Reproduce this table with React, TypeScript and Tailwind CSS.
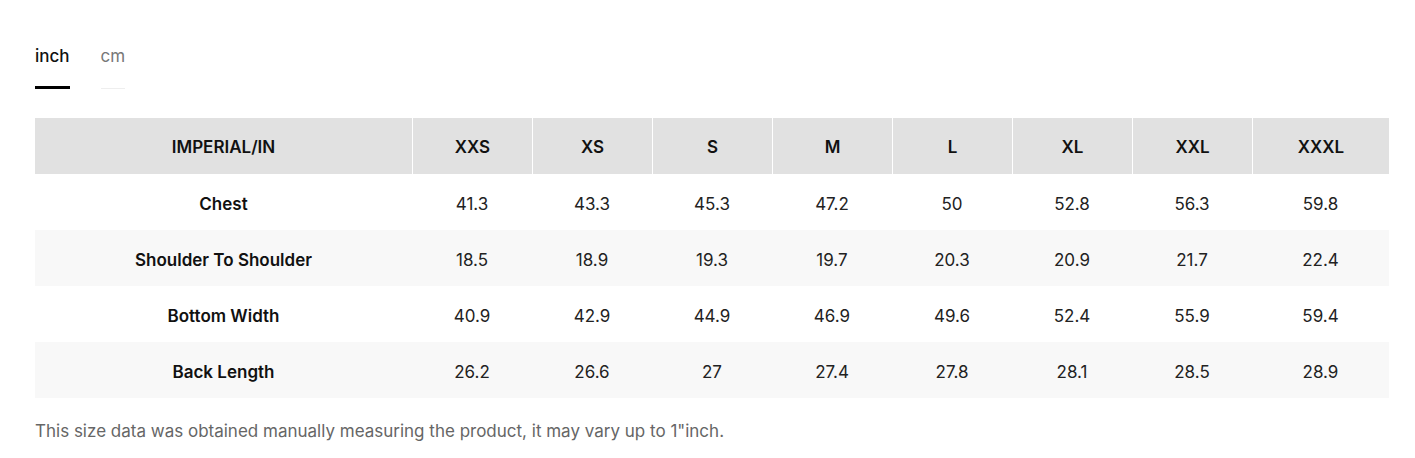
import { useState } from "react";

const sizes = ["XXS", "XS", "S", "M", "L", "XL", "XXL", "XXXL"];

const rows: { label: string; values: string[] }[] = [
  { label: "Chest", values: ["41.3", "43.3", "45.3", "47.2", "50", "52.8", "56.3", "59.8"] },
  { label: "Shoulder To Shoulder", values: ["18.5", "18.9", "19.3", "19.7", "20.3", "20.9", "21.7", "22.4"] },
  { label: "Bottom Width", values: ["40.9", "42.9", "44.9", "46.9", "49.6", "52.4", "55.9", "59.4"] },
  { label: "Back Length", values: ["26.2", "26.6", "27", "27.4", "27.8", "28.1", "28.5", "28.9"] },
];

export default function App() {
  const [unit, setUnit] = useState<"inch" | "cm">("inch");

  return (
    <div className="w-[1415px] h-[458px] bg-white font-['Inter','Liberation_Sans',sans-serif] text-[#111]">
      <div className="pl-[35px] pt-[43px]">
        {/* Unit tabs */}
        <div className="flex gap-[31px]">
          <button
            onClick={() => setUnit("inch")}
            className={`pb-[17px] text-[17px] leading-[26px] border-b-[3px] ${
              unit === "inch" ? "text-[#111] border-black font-medium" : "text-[#777] border-[#eee]"
            }`}
          >
            inch
          </button>
          <button
            onClick={() => setUnit("cm")}
            className={`pb-[19px] text-[17px] leading-[26px] self-start ${
              unit === "cm" ? "text-[#111] border-b-[3px] border-black" : "text-[#777] border-b border-[#eee]"
            }`}
          >
            cm
          </button>
        </div>

        {/* Size table */}
        <div className="mt-[29px] w-[1354px]">
          <div className="grid grid-cols-[377px_repeat(7,120px)_1fr] bg-[#e1e1e1] h-[56px] text-[17px] font-semibold">
            <div className="flex items-center justify-center pt-[4px]">IMPERIAL/IN</div>
            {sizes.map((s) => (
              <div key={s} className="flex items-center justify-center pt-[4px] border-l border-white">
                {s}
              </div>
            ))}
          </div>
          {rows.map((r, i) => (
            <div
              key={r.label}
              className={`grid grid-cols-[377px_repeat(7,120px)_1fr] h-[56px] text-[17px] ${
                i % 2 === 1 ? "bg-[#f8f8f8]" : "bg-white"
              }`}
            >
              <div className="flex items-center justify-center pt-[5px] font-semibold">{r.label}</div>
              {r.values.map((v, j) => (
                <div key={j} className="flex items-center justify-center pt-[5px] text-[#222]">
                  {v}
                </div>
              ))}
            </div>
          ))}
        </div>

        <p className="mt-[21px] text-[17px] text-[#666]">
          This size data was obtained manually measuring the product, it may vary up to 1"inch.
        </p>
      </div>
    </div>
  );
}
